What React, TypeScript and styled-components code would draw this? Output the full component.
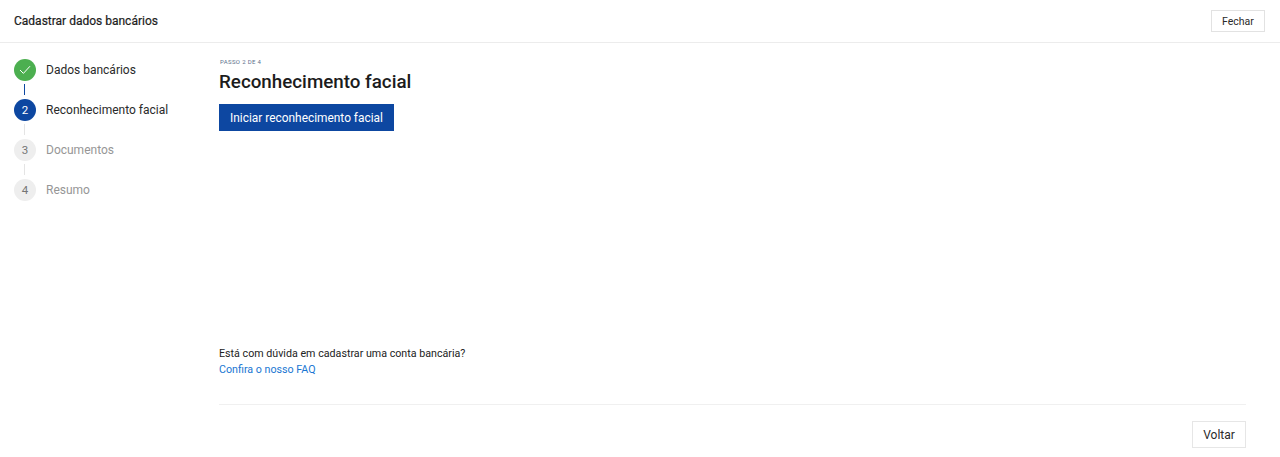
import * as React from 'react';
import styled, { createGlobalStyle } from 'styled-components';

const GlobalStyle = createGlobalStyle`
  html, body {
    margin: 0;
    padding: 0;
    background: #fff;
    font-family: Roboto, "Liberation Sans", sans-serif;
  }
  * {
    box-sizing: border-box;
  }
`;

const Page = styled.div`
  width: 1280px;
  height: 457px;
  display: flex;
  flex-direction: column;
  overflow: hidden;
`;

const Header = styled.header`
  height: 43px;
  flex: none;
  display: flex;
  align-items: center;
  justify-content: space-between;
  padding: 0 15px 0 14px;
  border-bottom: 1px solid #ececec;
`;

const HeaderTitle = styled.h1`
  margin: 0;
  font-size: 12px;
  font-weight: 400;
  -webkit-text-stroke: 0.2px #1c1c1c;
  color: #1c1c1c;
`;

const CloseButton = styled.button`
  width: 54px;
  height: 22px;
  padding: 0;
  background: #fff;
  border: 1px solid #e2e2e2;
  font-family: inherit;
  font-size: 10.5px;
  color: #2a2a2a;
`;

const Body = styled.div`
  flex: 1;
  display: flex;
  min-height: 0;
`;

const Sidebar = styled.nav`
  width: 219px;
  flex: none;
  padding: 16px 0 0 14px;
`;

type StepState = 'done' | 'active' | 'todo';

const StepRow = styled.div`
  display: flex;
  align-items: center;
  gap: 10px;
  height: 21px;
`;

const StepCircle = styled.div<{ $state: StepState }>`
  width: 22px;
  height: 22px;
  flex: none;
  border-radius: 50%;
  display: flex;
  align-items: center;
  justify-content: center;
  font-size: 11.5px;
  background: ${p =>
    p.$state === 'done' ? '#4caf50' : p.$state === 'active' ? '#0d47a1' : '#eeeeee'};
  color: ${p => (p.$state === 'todo' ? '#757575' : '#fff')};
`;

const StepLabel = styled.span<{ $state: StepState }>`
  font-size: 12px;
  color: ${p => (p.$state === 'todo' ? '#969696' : '#2a2a2a')};
`;

const Connector = styled.div<{ $active: boolean }>`
  width: 1px;
  height: 11px;
  margin: 4px 0 4px 10px;
  background: ${p => (p.$active ? '#0d47a1' : '#e4e4e4')};
`;

const Main = styled.main`
  flex: 1;
  display: flex;
  flex-direction: column;
  padding: 15px 34px 0 0;
`;

const StepHint = styled.div`
  font-size: 6px;
  line-height: 7px;
  letter-spacing: 0.35px;
  padding-left: 1px;
  color: #5c6f8c;
`;

const Title = styled.h2`
  margin: 6px 0 0;
  font-size: 18.8px;
  line-height: 22px;
  font-weight: 500;
  color: #1c1c1c;
`;

const PrimaryButton = styled.button`
  align-self: flex-start;
  margin-top: 11px;
  width: 175px;
  height: 27px;
  padding: 0;
  border: none;
  background: #0d47a1;
  color: #fff;
  font-family: inherit;
  font-size: 11.9px;
`;

const HelpBlock = styled.div`
  margin-top: 215px;
  font-size: 10.7px;
  line-height: 16px;
  color: #222;
`;

const HelpLink = styled.a`
  display: block;
  color: #1976d2;
`;

const Footer = styled.div`
  margin-top: 26px;
  padding-top: 16px;
  border-top: 1px solid #f0f0f0;
  display: flex;
  justify-content: flex-end;
`;

const BackButton = styled.button`
  width: 54px;
  height: 27px;
  padding: 0;
  background: #fff;
  border: 1px solid #e6e6e6;
  font-family: inherit;
  font-size: 12px;
  color: #2a2a2a;
`;

const steps: { label: string; state: StepState; mark: string }[] = [
  { label: 'Dados bancários', state: 'done', mark: '' },
  { label: 'Reconhecimento facial', state: 'active', mark: '2' },
  { label: 'Documentos', state: 'todo', mark: '3' },
  { label: 'Resumo', state: 'todo', mark: '4' },
];

const Check = () => (
  <svg width="12" height="10" viewBox="0 0 12 10" fill="none">
    <path d="M1 5L4.4 8.4L11 1.2" stroke="#fff" strokeWidth="1" />
  </svg>
);

export default function App() {
  return (
    <Page>
      <GlobalStyle />
      <Header>
        <HeaderTitle>Cadastrar dados bancários</HeaderTitle>
        <CloseButton>Fechar</CloseButton>
      </Header>
      <Body>
        <Sidebar>
          {steps.map((step, i) => (
            <React.Fragment key={step.label}>
              <StepRow>
                <StepCircle $state={step.state}>
                  {step.state === 'done' ? <Check /> : step.mark}
                </StepCircle>
                <StepLabel $state={step.state}>{step.label}</StepLabel>
              </StepRow>
              {i < steps.length - 1 && <Connector $active={i === 0} />}
            </React.Fragment>
          ))}
        </Sidebar>
        <Main>
          <StepHint>PASSO 2 DE 4</StepHint>
          <Title>Reconhecimento facial</Title>
          <PrimaryButton>Iniciar reconhecimento facial</PrimaryButton>
          <HelpBlock>
            Está com dúvida em cadastrar uma conta bancária?
            <HelpLink>Confira o nosso FAQ</HelpLink>
          </HelpBlock>
          <Footer>
            <BackButton>Voltar</BackButton>
          </Footer>
        </Main>
      </Body>
    </Page>
  );
}
